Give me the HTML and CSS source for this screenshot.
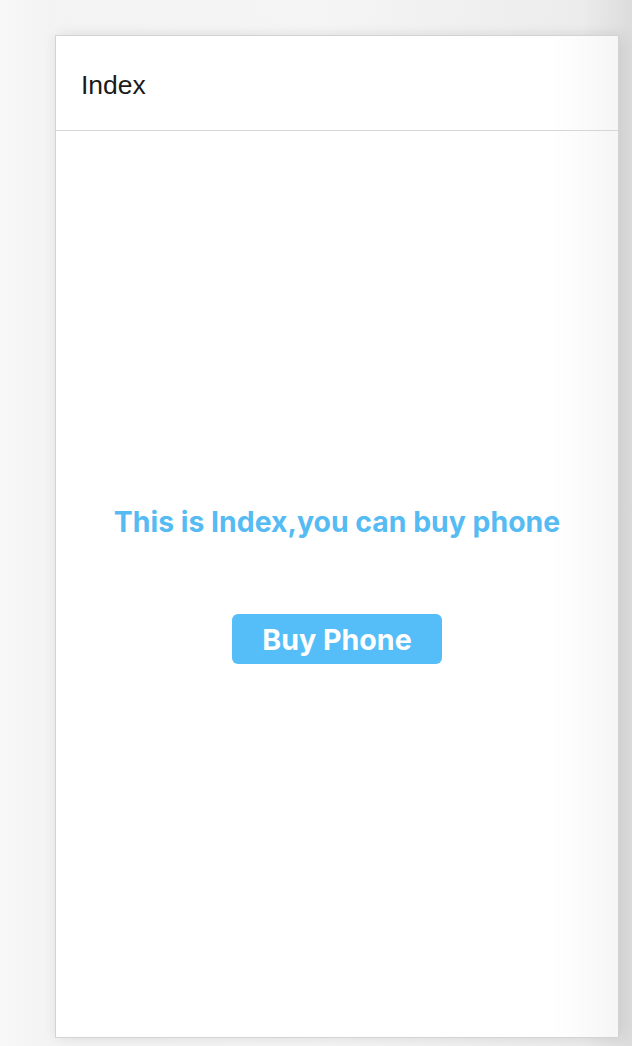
FILE: index.html
```html
<!DOCTYPE html>
<html>
<head>
<meta charset="utf-8">
<link rel="stylesheet" href="styles.css">
</head>
<body>
<div class="frame">
  <header class="bar"><span class="title">Index</span></header>
  <main class="content">
    <h1 class="msg">This is Index,you can buy phone</h1>
    <button class="buy">Buy Phone</button>
  </main>
</div>
</body>
</html>
```

FILE: styles.css
```css
html, body {
  margin: 0;
  padding: 0;
}
body {
  width: 632px;
  height: 1046px;
  overflow: hidden;
  background: linear-gradient(90deg, #f8f8f8 0%, #f3f3f3 8%, #f5f5f5 50%, #ececec 92%, #dcdcdc 100%);
  padding: 35px 0 0 55px;
  box-sizing: border-box;
}
.frame {
  width: 564px;
  height: 1003px;
  box-sizing: border-box;
  border: 1px solid #d3d3d3;
  background: linear-gradient(90deg, #ffffff 0%, #ffffff 88%, #f6f6f6 100%);
  box-shadow: 6px 0 14px rgba(0,0,0,0.08), -4px 0 10px rgba(0,0,0,0.03);
  display: flex;
  flex-direction: column;
}
.bar {
  height: 95px;
  box-sizing: border-box;
  border-bottom: 1px solid #d6d6d6;
  display: flex;
  align-items: center;
  padding: 4px 0 0 25px;
}
.title {
  font-family: "Liberation Sans", Arial, sans-serif;
  font-size: 26.5px;
  color: #1a1a1a;
}
.content {
  flex: 1;
  display: flex;
  flex-direction: column;
  align-items: center;
  justify-content: center;
  padding-top: 2px;
}
.msg {
  margin: 0 0 76px 0;
  font-family: Inter, "Noto Sans", sans-serif;
  font-weight: 700;
  font-size: 28.4px;
  line-height: 32px;
  color: #56bbf3;
}
.buy {
  width: 210px;
  height: 50px;
  border: none;
  border-radius: 6px;
  background: #55bef8;
  color: #ffffff;
  font-family: Inter, "Noto Sans", sans-serif;
  font-weight: 700;
  font-size: 28.6px;
  padding: 0;
}
```
